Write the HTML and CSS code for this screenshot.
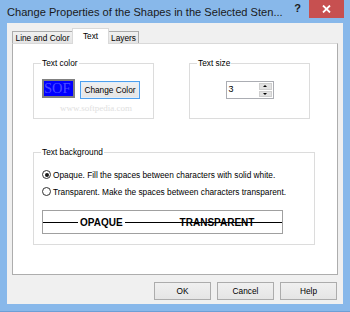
FILE: index.html
```html
<!DOCTYPE html>
<html lang="en">
<head>
    <meta charset="UTF-8">
    <title>Change Properties</title>
    <link rel="stylesheet" href="styles.css">
</head>
<body>
    <div class="window">
        <!-- title bar -->
        <div class="titlebar">
            <span class="title">Change Properties of the Shapes in the Selected Sten...</span>
            <span class="help-btn">?</span>
            <span class="close-btn">
                <svg width="9" height="8" viewBox="0 0 9 8"><path d="M1 0.5 L8 7.5 M8 0.5 L1 7.5" stroke="#fff" stroke-width="1.8"/></svg>
            </span>
        </div>

        <div class="client">
            <div class="tabs">
                <div class="tab tab-line">Line and Color</div>
                <div class="tab active">Text</div>
                <div class="tab tab-layers">Layers</div>
            </div>

            <div class="tab-panel">
                <div class="group-row">
                    <fieldset class="group group-color">
                        <legend>Text color</legend>
                        <div class="color-row">
                            <div class="swatch"><span class="wm-big">SOF</span></div>
                            <button class="btn btn-focus">Change Color</button>
                        </div>
                        <div class="wm-small">www.softpedia.com</div>
                    </fieldset>

                    <fieldset class="group group-size">
                        <legend>Text size</legend>
                        <div class="spinner">
                            <span class="spin-value">3</span>
                            <span class="spin-buttons">
                                <span class="spin-up"></span>
                                <span class="spin-down"></span>
                            </span>
                        </div>
                    </fieldset>
                </div>

                <fieldset class="group group-bg">
                    <legend>Text background</legend>
                    <label class="radio-row">
                        <span class="radio checked"></span>
                        Opaque. Fill the spaces between characters with solid white.
                    </label>
                    <label class="radio-row">
                        <span class="radio"></span>
                        Transparent. Make the spaces between characters transparent.
                    </label>
                    <div class="preview">
                        <span class="sample-opaque">OPAQUE</span>
                        <span class="sample-transparent">TRANSPARENT</span>
                    </div>
                </fieldset>
            </div>

            <div class="buttons">
                <button class="btn dlg-btn">OK</button>
                <button class="btn dlg-btn">Cancel</button>
                <button class="btn dlg-btn">Help</button>
            </div>
        </div>
    </div>
</body>
</html>
```

FILE: styles.css
```css
body {
    margin: 0;
    padding: 0;
    background: #ffffff;
    font-family: 'Liberation Sans', Arial, sans-serif;
}

.window {
    width: 350px;
    height: 312px;
    background: #88b8ea;
    display: flex;
    flex-direction: column;
    box-sizing: border-box;
    border-bottom: 1px solid #6d9fd6;
}

.titlebar {
    height: 23px;
    display: flex;
    align-items: center;
    padding: 0 6px 0 7px;
}

.title {
    font-size: 11.1px;
    color: #1a1a1a;
    white-space: nowrap;
}

.help-btn {
    font-size: 11px;
    font-weight: bold;
    color: #1a1a1a;
    margin-left: auto;
    margin-right: 8px;
    margin-top: -7px;
}

.close-btn {
    align-self: flex-start;
    width: 35px;
    height: 18px;
    background: #c75050;
    display: flex;
    align-items: center;
    justify-content: center;
}

.client {
    flex: 1;
    margin: 0 7px 7px;
    background: #f0f0f0;
    padding: 5px 5px 0;
    font-size: 8.3px;
    color: #000;
    display: flex;
    flex-direction: column;
}

.tabs {
    display: flex;
    align-items: flex-end;
    height: 15px;
    position: relative;
    z-index: 1;
}

.tab {
    height: 12px;
    box-sizing: border-box;
    border: 1px solid #acacac;
    border-bottom: none;
    background: linear-gradient(#f0f0f0, #e5e5e5);
    display: flex;
    align-items: center;
    justify-content: center;
}

.tab-line {
    width: 60px;
    border-right: none;
}

.tab-layers {
    width: 30px;
    border-left: none;
}

.tab.active {
    width: 37px;
    height: 16px;
    margin-bottom: -1px;
    background: #ffffff;
    border-color: #d9d9d9;
    border-bottom: none;
    align-items: flex-start;
    padding-top: 2px;
}

.tab-panel {
    height: 232px;
    box-sizing: border-box;
    background: #ffffff;
    border: 1px solid #adadad;
    border-top-color: #d9d9d9;
    padding: 14px 0 0 20px;
}

.group-row {
    display: flex;
    gap: 35px;
}

.group {
    margin: 0;
    border: 1px solid #dcdcdc;
    padding: 0 8px;
    box-sizing: border-box;
    min-width: 0;
}

.group legend {
    padding: 0 1px;
    margin-left: -1px;
    line-height: 11px;
}

.group-color,
.group-size {
    width: 121px;
    height: 61px;
}

.color-row {
    display: flex;
    align-items: flex-start;
    gap: 5px;
    margin-top: 10px;
}

.swatch {
    width: 33px;
    height: 19px;
    box-sizing: border-box;
    background: #0000ff;
    border: 2px solid #808080;
    display: flex;
    align-items: center;
}

.wm-big {
    font-family: 'Liberation Serif', serif;
    font-size: 14.5px;
    line-height: 15px;
    color: rgba(255, 255, 255, 0.3);
}

.wm-small {
    font-family: 'Liberation Serif', serif;
    font-size: 9px;
    line-height: 10px;
    color: #e0e0e0;
    margin: 4px 0 0 18px;
}

.btn {
    font-family: 'Liberation Sans', Arial, sans-serif;
    font-size: 8.3px;
    color: #000;
    background: linear-gradient(#f0f0f0, #e5e5e5);
    border: 1px solid #acacac;
    padding: 0;
    height: 18px;
}

.btn-focus {
    width: 60px;
    margin-top: 2px;
    border-color: #4ea0ee;
    box-shadow: inset 0 0 0 1px #e1eefb;
}

.spinner {
    display: flex;
    width: 48px;
    height: 18px;
    box-sizing: border-box;
    margin: 12px auto 0;
    border: 1px solid #abadb3;
    background: #fff;
}

.spin-value {
    flex: 1;
    padding-left: 2px;
    font-size: 9px;
    line-height: 15px;
}

.spin-buttons {
    width: 13px;
    display: flex;
    flex-direction: column;
    gap: 1px;
    padding: 1px 1px 1px 0;
}

.spin-up,
.spin-down {
    flex: 1;
    background: #e2e2e2;
    border: 1px solid #cfcfcf;
    display: flex;
    align-items: center;
    justify-content: center;
}

.spin-up::after {
    content: "";
    border-left: 2px solid transparent;
    border-right: 2px solid transparent;
    border-bottom: 2px solid #000;
}

.spin-down::after {
    content: "";
    border-left: 2px solid transparent;
    border-right: 2px solid transparent;
    border-top: 2px solid #000;
}

.group-bg {
    width: 282px;
    margin-top: 28px;
    padding: 10px 8px 10px;
    display: flex;
    flex-direction: column;
    gap: 4px;
}

.radio-row {
    display: flex;
    align-items: center;
    gap: 2px;
    height: 13px;
    white-space: nowrap;
}

.radio {
    width: 9px;
    height: 9px;
    box-sizing: border-box;
    border: 1px solid #333;
    border-radius: 50%;
    background: #fff;
    display: flex;
    align-items: center;
    justify-content: center;
}

.radio.checked::after {
    content: "";
    width: 4px;
    height: 4px;
    border-radius: 50%;
    background: #1a1a1a;
}

.preview {
    margin-top: 8px;
    width: 241px;
    height: 24px;
    box-sizing: border-box;
    border: 1px solid #a0a0a0;
    background: #fff linear-gradient(#000, #000) center / 100% 1px no-repeat;
    display: flex;
    align-items: center;
    font-size: 10px;
    font-weight: bold;
}

.sample-opaque {
    background: #fff;
    padding: 0 2px;
    margin-left: 35px;
}

.sample-transparent {
    margin-left: 55px;
}

.buttons {
    display: flex;
    justify-content: flex-end;
    gap: 6px;
    margin-top: 7px;
    padding-right: 1px;
}

.dlg-btn {
    width: 57px;
}
```
